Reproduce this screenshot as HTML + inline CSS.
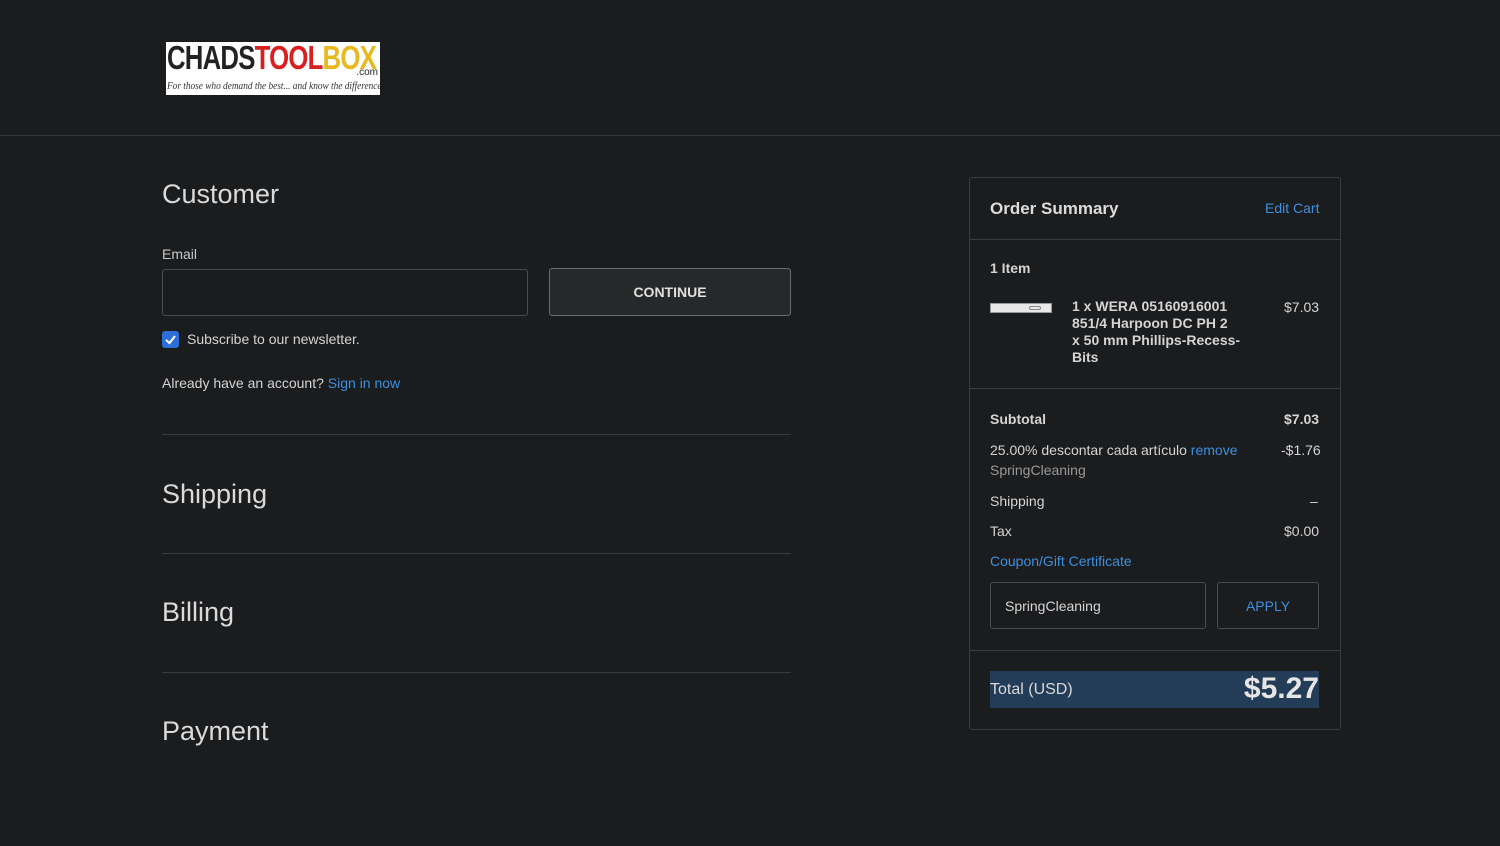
<!DOCTYPE html>
<html><head><meta charset="utf-8"><style>
*{box-sizing:border-box;margin:0;padding:0}
body{width:1500px;height:846px;background:#1b1c1e;color:#d4d4d4;font-family:"Liberation Sans",sans-serif;position:relative;overflow:hidden}
.a{position:absolute}
.blue{color:#3d8fe0}
.h{font-size:27px;color:#dadada}
.hr{position:absolute;left:162px;width:629px;height:1px;background:#3a3b3d}
.t{font-size:14px}
.b{font-weight:bold}
</style></head><body>
<div class="a" style="left:0;top:135px;width:1500px;height:1px;background:#38393b"></div>
<div class="a" style="left:166px;top:42px;width:214px;height:53px;background:#fff;overflow:hidden">
<div class="a" style="left:1px;top:-3px;font:bold 33px/38px 'Liberation Sans',sans-serif;letter-spacing:-1px;white-space:nowrap;transform:scaleX(0.78);transform-origin:0 0"><span style="color:#222">CHADS</span><span style="color:#d92020">TOOL</span><span style="color:#e8b820">BOX</span></div>
<div class="a" style="right:2px;top:25px;font-size:10px;color:#222">.com</div>
<div class="a" style="left:1px;top:39px;font:italic 10px 'Liberation Serif',serif;color:#333;white-space:nowrap;transform:scaleX(0.93);transform-origin:0 0">For those who demand the best... and know the difference.</div>
</div>
<div class="a h" style="left:162px;top:179px">Customer</div>
<div class="a t" style="left:162px;top:246px;color:#c8c8c8">Email</div>
<div class="a" style="left:162px;top:269px;width:366px;height:47px;border:1px solid #4a4b4d;border-radius:3px"></div>
<div class="a" style="left:549px;top:268px;width:242px;height:48px;border:1px solid #6a6b6d;border-radius:3px;background:#262829;text-align:center;line-height:46px;font-size:14px;font-weight:bold;color:#e0e0e0">CONTINUE</div>
<div class="a" style="left:162px;top:331px;width:17px;height:17px;border-radius:3px;background:#2d6fd6"><svg width="17" height="17"><path d="M4 9 L7.5 12 L13 5" stroke="#fff" stroke-width="2" fill="none"/></svg></div>
<div class="a t" style="left:187px;top:331px">Subscribe to our newsletter.</div>
<div class="a t" style="left:162px;top:375px">Already have an account? <span class="blue">Sign in now</span></div>
<div class="hr" style="top:434px"></div>
<div class="a h" style="left:162px;top:479px">Shipping</div>
<div class="hr" style="top:553px"></div>
<div class="a h" style="left:162px;top:597px">Billing</div>
<div class="hr" style="top:672px"></div>
<div class="a h" style="left:162px;top:716px">Payment</div>

<div class="a" style="left:969px;top:177px;width:372px;height:553px;border:1px solid #3a3b3d;border-radius:3px"></div>
<div class="a" style="left:990px;top:199px;font-size:17px;font-weight:bold;color:#dcdcdc">Order Summary</div>
<div class="a t blue" style="left:1265px;top:200px">Edit Cart</div>
<div class="a" style="left:970px;top:239px;width:370px;height:1px;background:#3a3b3d"></div>
<div class="a t b" style="left:990px;top:260px">1 Item</div>
<div class="a" style="left:990px;top:303px;width:62px;height:10px;background:#e8e8e8;border:1px solid #999"><div class="a" style="left:38px;top:2px;width:12px;height:4px;border:1px solid #888;border-radius:2px"></div></div>
<div class="a t b" style="left:1072px;top:298px;width:180px;line-height:17px;white-space:nowrap">1 x WERA 05160916001<br>851/4 Harpoon DC PH 2<br>x 50 mm Phillips-Recess-<br>Bits</div>
<div class="a t" style="left:1284px;top:299px">$7.03</div>
<div class="a" style="left:970px;top:388px;width:370px;height:1px;background:#3a3b3d"></div>
<div class="a t b" style="left:990px;top:411px">Subtotal</div>
<div class="a t b" style="left:1284px;top:411px">$7.03</div>
<div class="a t" style="left:990px;top:442px">25.00% descontar cada artículo <span class="blue">remove</span></div>
<div class="a t" style="left:1281px;top:442px">-$1.76</div>
<div class="a t" style="left:990px;top:462px;color:#999">SpringCleaning</div>
<div class="a t" style="left:990px;top:493px">Shipping</div>
<div class="a t" style="left:1310px;top:493px">–</div>
<div class="a t" style="left:990px;top:523px">Tax</div>
<div class="a t" style="left:1284px;top:523px">$0.00</div>
<div class="a t blue" style="left:990px;top:553px">Coupon/Gift Certificate</div>
<div class="a t" style="left:990px;top:582px;width:216px;height:47px;border:1px solid #4a4b4d;border-radius:3px;padding:15px 14px">SpringCleaning</div>
<div class="a t blue" style="left:1217px;top:582px;width:102px;height:47px;border:1px solid #4a4b4d;border-radius:3px;text-align:center;line-height:47px">APPLY</div>
<div class="a" style="left:970px;top:650px;width:370px;height:1px;background:#3a3b3d"></div>
<div class="a" style="left:990px;top:671px;width:329px;height:37px;background:#233d58"></div>
<div class="a" style="left:990px;top:681px;font-size:16px;color:#d8d8d8">Total (USD)</div>
<div class="a" style="right:181px;top:672px;font-size:30px;font-weight:bold;color:#e6e6e6">$5.27</div>
</body></html>
